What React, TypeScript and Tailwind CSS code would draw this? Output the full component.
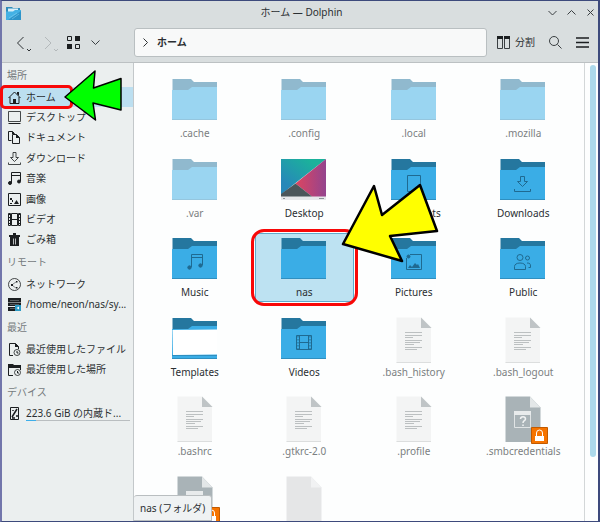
import clsx from "clsx";
import React, { useState } from "react";

type IconName =
  | "folder"
  | "desktop"
  | "documents"
  | "downloads"
  | "music"
  | "pictures"
  | "public"
  | "templates"
  | "videos"
  | "text"
  | "unknown"
  | "blank";

type Entry = { name: string; icon: IconName; hidden?: boolean };

const entries: Entry[] = [
  { name: ".cache", icon: "folder", hidden: true },
  { name: ".config", icon: "folder", hidden: true },
  { name: ".local", icon: "folder", hidden: true },
  { name: ".mozilla", icon: "folder", hidden: true },
  { name: ".var", icon: "folder", hidden: true },
  { name: "Desktop", icon: "desktop" },
  { name: "Documents", icon: "documents" },
  { name: "Downloads", icon: "downloads" },
  { name: "Music", icon: "music" },
  { name: "nas", icon: "folder" },
  { name: "Pictures", icon: "pictures" },
  { name: "Public", icon: "public" },
  { name: "Templates", icon: "templates" },
  { name: "Videos", icon: "videos" },
  { name: ".bash_history", icon: "text", hidden: true },
  { name: ".bash_logout", icon: "text", hidden: true },
  { name: ".bashrc", icon: "text", hidden: true },
  { name: ".gtkrc-2.0", icon: "text", hidden: true },
  { name: ".profile", icon: "text", hidden: true },
  { name: ".smbcredentials", icon: "unknown", hidden: true },
  { name: "", icon: "unknown", hidden: true },
  { name: "", icon: "blank", hidden: true },
];

const folderGlyphs: Partial<Record<IconName, React.ReactNode>> = {
  documents: <path d="M17.5 19.5h13v16h-13z" />,
  downloads: (
    <path d="M21.5 20.5h4v5h3l-5 5-5-5h3zM15.5 33v2.5h16V33" />
  ),
  music: (
    <>
      <path d="M20.5 32V19.5h11V30M20.5 22.5h11" />
      <circle cx="18.5" cy="32.5" r="1.7" fill="#1f6a91" />
      <circle cx="29.5" cy="30.5" r="1.7" fill="#1f6a91" />
    </>
  ),
  pictures: (
    <>
      <path d="M20 19.5h11.5v15h-15V23" />
      <circle cx="18.5" cy="21.5" r="1.5" fill="#1f6a91" />
      <path d="m18 33 2-3 2 2 3-4 2 2 1-1 2 4z" fill="#1f6a91" stroke="none" />
    </>
  ),
  public: (
    <>
      <circle cx="21" cy="22.5" r="3" />
      <path d="M15.5 34.5v-3c0-2 2-3.5 5.5-3.5s5.5 1.5 5.5 3.5v3z" />
      <circle cx="28.5" cy="23" r="2" />
      <path d="M28 28c3 0 3.5 1 3.5 3v1.5h-2" />
    </>
  ),
  videos: (
    <>
      <path d="M16.5 20.5h15v14h-15zM19.5 20.5v14M28.5 20.5v14M19.5 27.5h9" />
      <path d="M18 21v14M30 21v14" strokeDasharray="1.5 1.5" />
    </>
  ),
};

function Folder({ icon }: { icon: IconName }) {
  return (
    <>
      <path d="M1.5 3H20l3 3h23v9H1.5z" fill="#25779f" />
      <path d="M1 14h16l4-3h25v33H1z" fill="#3aade6" />
      <path d="M1 43.5h45" stroke="#2f8fc0" />
      {icon === "templates" && (
        <>
          <path d="M1.5 15 46 14.5V39.5L2 40z" fill="#fff" />
          <path d="M1 40.5h45" stroke="#2a83b0" strokeWidth="0.7" />
        </>
      )}
      <g fill="none" stroke="#1f6a91">
        {folderGlyphs[icon]}
      </g>
    </>
  );
}

function LockBadge() {
  return (
    <>
      <path d="M32.5 33.5h16v16h-16z" fill="#f67400" stroke="#c25a00" />
      <path d="M37.5 42v-3a3 3 0 0 1 6 0v3" fill="none" stroke="#fff" />
      <path d="M36 42h9v5h-9z" fill="#fff" />
    </>
  );
}

function EntryIcon({ icon, hidden }: { icon: IconName; hidden?: boolean }) {
  return (
    <svg
      viewBox="0 0 48 48"
      className="size-12 shrink-0 overflow-visible"
      aria-hidden="true"
    >
      {icon === "desktop" && (
        <>
          <defs>
            <linearGradient id="teal" x1="0" y1="1" x2="1" y2="0">
              <stop offset="0.2" stopColor="#2788b9" />
              <stop offset="0.8" stopColor="#1bb29b" />
            </linearGradient>
            <linearGradient id="rose" x1="0" y1="0" x2="1" y2="0">
              <stop offset="0" stopColor="#dd4560" />
              <stop offset="1" stopColor="#94448e" />
            </linearGradient>
          </defs>
          <path d="M1 3h45v41H1z" fill="#e6e8ea" />
          <path d="M1 3h45L15.5 27 1 38.5z" fill="url(#teal)" />
          <path d="M46 3v37.5H32L15.5 27.5z" fill="url(#rose)" />
          <path d="m15.5 27.500 16.5 13H1V38z" fill="#4b565a" />
          <path d="M3 42.5h2M39 42.5h5" stroke="#8d9499" />
        </>
      )}
      {icon === "text" && (
        <>
          <path d="M6.5 2.5H31l10 10V48H6.5z" fill="#f3f4f4" />
          <path d="M6.5 47.5H41" stroke="#dcdede" />
          <path d="M31 2.5v10.5h10.5z" fill="#bfc4c6" />
          <path
            d="M15 17.5h17M15 20.5h17M15 22.5h8M15 25.5h17M15 27.5h15M15 29.5h9M15 32.5h17M15 34.5h12"
            stroke="#bcc0c1"
          />
        </>
      )}
      {icon === "unknown" && (
        <>
          <path d="M6.5 2.5H31l10.5 11V48h-35z" fill="#a9b3b7" />
          <path d="M31 2.5v11h10.5z" fill="#e3e7e8" />
          <path d="M15.5 17.5h16v16h-16z" fill="none" stroke="#e0e4e5" />
          <path d="M15 17h17v4H15z" fill="#e8ebec" />
          <path
            d="M21.5 25c0-3 5-3 5 0 0 2-2.5 1.5-2.5 4M24 30.500v1.500"
            fill="none"
            stroke="#f1f3f3"
            strokeWidth="1.5"
          />
          <LockBadge />
        </>
      )}
      {icon === "blank" && (
        <>
          <path d="M6.5 2.5H31l10.5 11V48h-35z" fill="#e5e6e7" />
          <path d="M31 2.5v11h10.5z" fill="#f1f2f3" />
        </>
      )}
      {!["desktop", "text", "unknown", "blank"].includes(icon) && (
        <g opacity={hidden ? 0.5 : 1}>
          <Folder icon={icon} />
        </g>
      )}
    </svg>
  );
}

const places = [
  {
    title: "場所",
    height: "h-[163px]",
    items: [
      { label: "ホーム", icon: "home" },
      { label: "デスクトップ", icon: "desktop" },
      { label: "ドキュメント", icon: "documents" },
      { label: "ダウンロード", icon: "downloads" },
      { label: "音楽", icon: "music" },
      { label: "画像", icon: "pictures" },
      { label: "ビデオ", icon: "videos" },
      { label: "ごみ箱", icon: "trash" },
    ],
  },
  {
    title: "リモート",
    height: "h-[41px]",
    items: [
      { label: "ネットワーク", icon: "network" },
      { label: "/home/neon/nas/sy...", icon: "server" },
    ],
  },
  {
    title: "最近",
    height: "h-[41px]",
    items: [
      { label: "最近使用したファイル", icon: "recentFile" },
      { label: "最近使用した場所", icon: "recentFolder" },
    ],
  },
  {
    title: "デバイス",
    height: "h-[18px]",
    items: [{ label: "223.6 GiB の内蔵ド...", icon: "disk", usage: 10 }],
  },
];

const placeIcons: Record<string, React.ReactNode> = {
  home: (
    <>
      <path d="M.5 7 6.500 1l6 6M2 6v6.500h9V6" />
      <path d="M5 8h3v5H5zM9 1h2v4L9 3z" fill="#1b1e20" stroke="none" />
    </>
  ),
  desktop: (
    <>
      <path d="M.5.5h12v10H.5z" strokeWidth="0.8" />
      <path d="M.5 12.500h12" />
    </>
  ),
  documents: (
    <>
      <path d="M3.5 9.500h-3v-9h4l2 2M4.500 3.500h4l3 3v6h-7z" />
      <path d="M8 3v4h4zM4 0v3h3z" fill="#1b1e20" stroke="none" />
    </>
  ),
  downloads: (
    <path
      d="M5 .5h3v5h2.500l-4 4-4-4H5zM.5 10.500v2h12v-2"
      strokeWidth="0.8"
    />
  ),
  music: (
    <>
      <path d="M3.5 11V.5h9V9M3.500 3.500h9" />
      <circle cx="2" cy="11" r="1.5" fill="#1b1e20" />
      <circle cx="11" cy="9.5" r="1.5" fill="#1b1e20" />
    </>
  ),
  pictures: (
    <>
      <path d="M.5.5h12v12H.5z" />
      <path
        d="M2 5h2v2H2zM4 7h1v2H4zM6 11l2.500-4L11 11zM2 10h2v1H2z"
        fill="#1b1e20"
        stroke="none"
      />
    </>
  ),
  videos: (
    <>
      <path d="M3.500.5h6v12h-6zM3.500 6.500h6" />
      <path d="M.5.5v12h2V.5zM10.500.5v12h2V.5z" />
      <path d="M1.500 1v12M11.500 1v12" strokeDasharray="1 2" />
    </>
  ),
  trash: (
    <>
      <path d="M1 2h11v2H1zM5 0h3v2H5zM2 4h9v9H2z" fill="#1b1e20" stroke="none" />
      <path d="M5.500 5.500v6M7.500 5.500v6" stroke="#b9bdbf" />
    </>
  ),
  network: (
    <>
      <circle cx="6.5" cy="6.5" r="6" strokeWidth="0.8" />
      <path
        d="M3 6h2v2H3zM8 3h1.500v1.500H8zM8 9h1.500v1.500H8z"
        fill="#1b1e20"
        stroke="none"
      />
      <path d="m5 6 3-2M5 8l3 2" strokeWidth="0.5" />
    </>
  ),
  server: (
    <>
      <path
        d="M0 0h13v4H0zM0 4.500h13v3.500H0zM0 9h13v4H0z"
        fill="#1b1e20"
        stroke="none"
      />
      <path d="M2 2.500h9M2 6.500h9M2 10.500h5" stroke="#8f9699" strokeWidth="0.5" />
      <path d="M7 7h6v6H7z" fill="#2b9ac4" stroke="none" />
      <path d="m8.500 10 2.500-1.500v3z" fill="#fff" stroke="none" />
    </>
  ),
  recentFile: (
    <>
      <path d="M5 12.500H1.500V.5h6l3 3V6" />
      <path d="M7 0v4h4z" fill="#1b1e20" stroke="none" />
      <circle cx="9" cy="9.5" r="3" strokeWidth="0.8" />
      <path d="M9 8v2h1.500" />
    </>
  ),
  recentFolder: (
    <>
      <path d="M5 12.500H.5V3.500h12V7" />
      <path d="M0 1h5l1 1h7v3H0z" fill="#1b1e20" stroke="none" />
      <circle cx="9.5" cy="9.5" r="3" strokeWidth="0.8" />
      <path d="M9.500 8v2H11" />
    </>
  ),
  disk: (
    <>
      <path d="M2.500.5h8v12h-8z" />
      <path d="M4 10 9 2M5 3v1M4 11h3M8 9h2" strokeWidth="1.5" />
    </>
  ),
};

function PlaceIcon({ name }: { name: string }) {
  return (
    <svg
      viewBox="0 0 13 13"
      className="size-[13px] shrink-0 fill-none stroke-[#1b1e20]"
      aria-hidden="true"
    >
      {placeIcons[name]}
    </svg>
  );
}

function TitleBar() {
  return (
    <div className="flex h-[23px] items-center pr-[3px] pl-1">
      <svg viewBox="0 0 15 14" className="h-[14px] w-[15px]" aria-hidden="true">
        <path d="M0 1h6l1 1h7v5H0z" fill="#2f8cba" />
        <path d="M2 2.500h10V8H2z" fill="#d7eff9" />
        <path d="M0 5.500h7l2-1.500h6v10H0z" fill="#43b1e4" />
        <path d="m2 14 13-9v9z" fill="#2d94c9" />
        <path d="m3 12 8-5M6 13l7-5" stroke="#8fd4f2" strokeWidth="0.5" />
      </svg>
      <h1 className="flex-1 pl-[34px] text-center">ホーム — Dolphin</h1>
      <div className="flex gap-[10px]">
        <WindowButton label="最小化" d="m.5 3 4 4 4-4" />
        <WindowButton label="最大化" d="m.5 6.500 4-4 4 4" />
        <WindowButton label="閉じる" d="m1.500 1.500 6 6m0-6-6 6" />
      </div>
    </div>
  );
}

function WindowButton({ label, d }: { label: string; d: string }) {
  return (
    <button type="button" aria-label={label}>
      <svg viewBox="0 0 9 9" className="size-[9px] fill-none stroke-[#3a3f42]">
        <path d={d} />
      </svg>
    </button>
  );
}

function Toolbar() {
  return (
    <div className="flex h-[39px] items-center border-b border-[#bcc1c3] pb-px">
      <div className="flex w-[132px] items-center pl-[13px]">
        <button type="button" aria-label="戻る">
          <svg viewBox="0 0 17 17" className="size-[17px] fill-none stroke-[#2e3235]">
            <path d="M8.500 3 2.500 9l6 6M12 15l2 2 2-2" />
          </svg>
        </button>
        <button type="button" aria-label="進む" className="ml-[10px]" disabled>
          <svg viewBox="0 0 17 17" className="size-[17px] fill-none stroke-[#b3b8ba]">
            <path d="m3 3 6 6-6 6M12 15l2 2 2-2" />
          </svg>
        </button>
        <button
          type="button"
          aria-label="表示モード"
          className="ml-2 flex items-center gap-[11px]"
        >
          <svg viewBox="0 0 13 13" className="size-[13px] fill-none stroke-[#1b1e20]">
            <path d="M.5.5h4v4h-4zM8.500 8.500h4v4h-4z" />
            <path d="M8 0h5v5H8zM0 8h5v5H0z" className="fill-[#1b1e20] stroke-none" />
          </svg>
          <svg viewBox="0 0 9 9" className="size-[9px] fill-none stroke-[#3a3f42]">
            <path d="m.5 2.500 4 4 4-4" />
          </svg>
        </button>
      </div>
      <nav
        aria-label="現在の場所"
        className="flex h-[29px] flex-1 items-center gap-[9px] rounded-[3px] border border-[#b9bfc1] bg-[#f8f9f9] pl-2"
      >
        <svg viewBox="0 0 5 9" className="h-[9px] w-[5px] fill-none stroke-[#2e3235]">
          <path d="m.5.5 4 4-4 4" />
        </svg>
        <a href="#home" className="font-bold">
          ホーム
        </a>
      </nav>
      <div className="flex items-center pr-[9px] pl-[10px]">
        <button type="button" className="flex items-center gap-[5px]">
          <svg viewBox="0 0 13 13" className="size-[13px] fill-none stroke-[#3a3f42]">
            <path d="M.5.5h5v12h-5zM7.500.5h5v12h-5z" />
            <path d="M0 0h6v3H0zM7 0h6v3H7z" className="fill-[#1b1e20] stroke-none" />
          </svg>
          分割
        </button>
        <button type="button" aria-label="検索" className="ml-[14px]">
          <svg viewBox="0 0 13 13" className="size-[13px] fill-none stroke-[#3a3f42]">
            <circle cx="5" cy="5" r="4.5" />
            <path d="m8.500 8.500 4 4" />
          </svg>
        </button>
        <button type="button" aria-label="メニュー" className="ml-[14px]">
          <svg viewBox="0 0 13 13" className="size-[13px] stroke-[#1b1e20]">
            <path d="M0 2h13M0 6.500h13M0 11h13" strokeWidth="1.6" />
          </svg>
        </button>
      </div>
    </div>
  );
}

function Places() {
  return (
    <nav
      aria-label="場所"
      className="relative z-10 w-[132px] shrink-0 border-r border-[#c3c8ca] bg-[#ebefef]"
    >
      {places.map((group) => (
        <section key={group.title}>
          <h2 className="flex h-6 items-center pl-[5px] text-[#757a7d]">
            {group.title}
          </h2>
          <ul className={clsx("grid auto-rows-fr", group.height)}>
            {group.items.map((item) => (
              <li
                key={item.label}
                className={clsx(
                  "relative flex",
                  item.icon === "home" && "z-10 bg-[#bcdff0]",
                )}
              >
                <a
                  href={`#${item.icon}`}
                  className="flex flex-1 items-center gap-[5px] pl-[6px] whitespace-nowrap"
                >
                  <PlaceIcon name={item.icon} />
                  {"usage" in item ? (
                    <span className="flex w-[104px] flex-col leading-[14px]">
                      {item.label}
                      <span className="h-px bg-[#b9bec0]">
                        <span
                          className="block h-px bg-[#3daee9]"
                          style={{ width: `${item.usage}%` }}
                        />
                      </span>
                    </span>
                  ) : (
                    item.label
                  )}
                </a>
                {item.icon === "home" && <HomeCallout />}
              </li>
            ))}
          </ul>
        </section>
      ))}
    </nav>
  );
}

function HomeCallout() {
  return (
    <>
      <span className="pointer-events-none absolute -top-[2px] -left-[2px] h-6 w-[73px] rounded-[5px] border-[3px] border-[#f80808]" />
      <svg
        viewBox="0 0 60 52"
        className="pointer-events-none absolute -top-[17px] left-[61px] h-[52px] w-[60px]"
        aria-hidden="true"
      >
        <path
          d="M2 27 32 1l-1.500 17L58 8.500V40l-28-7 2.500 17z"
          fill="#0f0"
          stroke="#000"
          strokeWidth="1.5"
          strokeLinejoin="round"
        />
      </svg>
    </>
  );
}

function SelectedCallout() {
  return (
    <>
      <span className="pointer-events-none absolute -inset-[5px] rounded-[13px] border-[3px] border-[#f80808]" />
      <svg
        viewBox="0 0 100 82"
        className="pointer-events-none absolute -top-[51px] left-[84px] h-[82px] w-[100px]"
        aria-hidden="true"
      >
        <path
          d="M3 61 34 3l8 29L80 2l17 46-47 5 12 25z"
          fill="#ff0"
          stroke="#000"
          strokeWidth="2.5"
          strokeLinejoin="round"
        />
      </svg>
    </>
  );
}

function FileView() {
  const [selected, setSelected] = useState<string>("nas");

  return (
    <main className="relative flex min-w-0 flex-1 overflow-hidden bg-[#fdfefe]">
      <ul className="grid h-[478px] flex-1 auto-rows-[69px] grid-cols-4 content-between px-[6px] pt-[11px]">
        {entries.map((entry, index) => (
          <li
            key={index}
            className={clsx(
              "relative mx-[5px] flex rounded-[3px] border",
              entry.name === selected
                ? "z-10 border-[#5fa9ca] bg-[#bde2f2]"
                : "border-transparent",
            )}
          >
            <button
              type="button"
              aria-label={entry.name || "ファイル"}
              onClick={() => setSelected(entry.name)}
              className={clsx(
                "flex flex-1 flex-col items-center pt-px leading-[18px] whitespace-nowrap",
                entry.hidden && "text-[#7b7f81]",
              )}
            >
              <EntryIcon icon={entry.icon} hidden={entry.hidden} />
              {entry.name}
            </button>
            {entry.name === "nas" && <SelectedCallout />}
          </li>
        ))}
      </ul>
      <div className="w-[14px] shrink-0 border-l border-[#d3d7d8] pt-[2px] pl-[5px]">
        <div className="h-[86%] w-[6px] rounded-full bg-[#acd9eb]" />
      </div>
      <div
        role="tooltip"
        className="absolute bottom-0 left-0 z-20 flex h-[26px] items-center rounded-t-[3px] border border-l-0 border-[#b9bec0] bg-[#eff2f3] px-[6px]"
      >
        nas (フォルダ)
      </div>
    </main>
  );
}

export default function App() {
  return (
    <div className="h-screen border-t border-r-2 border-b border-l-2 border-[#3d4a7c] border-l-[#7276ab] bg-[#d9dedf]">
      <div className="flex h-full flex-col font-['Noto_Sans','Noto_Sans_CJK_JP',sans-serif] text-[10px] text-[#2b2f32]">
        <TitleBar />
        <Toolbar />
        <div className="flex min-h-0 flex-1">
          <Places />
          <FileView />
        </div>
      </div>
    </div>
  );
}
